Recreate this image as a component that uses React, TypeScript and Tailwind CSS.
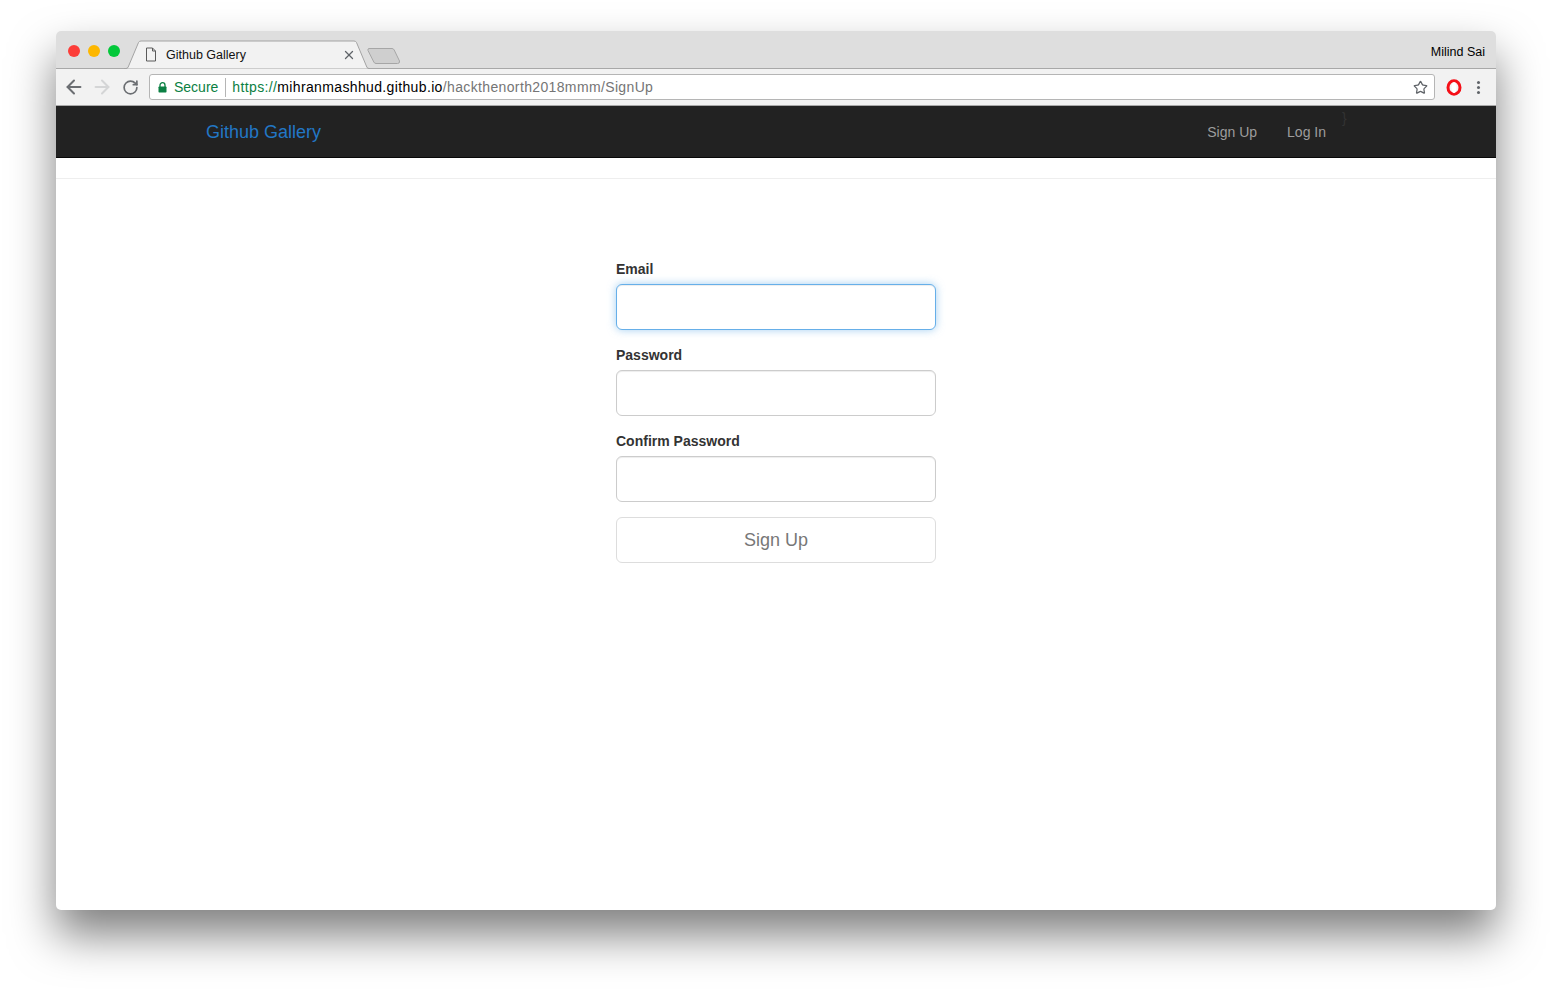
import { ArrowLeft, ArrowRight, RotateCw, Star, X } from 'lucide-react';

const FIELDS = [
  { label: 'Email', focused: true },
  { label: 'Password', focused: false },
  { label: 'Confirm Password', focused: false },
];

function TabShape() {
  return (
    <svg width="246" height="29" viewBox="0 0 246 29" className="absolute left-0 top-0">
      <path d="M0 28.5 H2 Q3.5 28.5 4.2 27 L14.5 2.5 Q15.2 1 17 1 H230 Q231.8 1 232.5 2.5 L242.8 27 Q243.5 28.5 245 28.5 H246" fill="#f2f2f2" stroke="#a3a3a3" strokeWidth="1" />
    </svg>
  );
}

function NewTabShape() {
  return (
    <svg width="34" height="18" viewBox="0 0 34 18">
      <path d="M2 1.5 H25 Q26.5 1.5 27.2 3 L32.5 14 Q33 16.5 30.5 16.5 H9 Q7.5 16.5 6.8 15 L1 3.5 Q0.5 1.5 2 1.5 Z" fill="#cfcfcf" stroke="#a6a6a6" strokeWidth="1" />
    </svg>
  );
}

function FileIcon() {
  return (
    <svg width="12" height="15" viewBox="0 0 12 15" fill="none" stroke="#5a5a5a" strokeWidth="1">
      <path d="M1.5 1 H7.5 L10.5 4 V14 H1.5 Z M7.5 1 V4 H10.5" />
    </svg>
  );
}

function LockIcon() {
  return (
    <svg width="9" height="11" viewBox="0 0 9 11">
      <path d="M2 5 V3.2 A2.5 2.5 0 0 1 7 3.2 V5" fill="none" stroke="#0b8043" strokeWidth="1.3" />
      <rect x="0.5" y="4.5" width="8" height="6" rx="0.7" fill="#0b8043" />
    </svg>
  );
}

function OperaIcon() {
  return (
    <svg width="16" height="17" viewBox="0 0 16 17">
      <ellipse cx="8" cy="8.5" rx="6" ry="6.7" fill="none" stroke="#f50f17" strokeWidth="3" />
      <ellipse cx="8" cy="8.5" rx="2.5" ry="5.6" fill="#fff" />
    </svg>
  );
}

function Field({ label, focused }: { label: string; focused: boolean }) {
  return (
    <div className="mb-[15px]">
      <label className="mb-[5px] block h-5 text-[14px] font-bold leading-5 text-[#333333]">{label}</label>
      <input
        type={label === 'Email' ? 'email' : 'password'}
        className={
          focused
            ? 'block h-[46px] w-full rounded-md border border-[#66afe9] bg-white shadow-[inset_0_1px_1px_rgba(0,0,0,0.075),0_0_8px_rgba(102,175,233,0.6)] outline-none'
            : 'block h-[46px] w-full rounded-md border border-[#cccccc] bg-white shadow-[inset_0_1px_1px_rgba(0,0,0,0.075)] outline-none'
        }
      />
    </div>
  );
}

export default function App() {
  return (
    <div className="h-[990px] w-[1552px] overflow-hidden bg-white pl-14 pt-[31px] font-['Liberation_Sans',Arial,sans-serif]">
      <div className="flex h-[879px] w-[1440px] flex-col overflow-hidden rounded-[5px] bg-white shadow-[0_25px_45px_rgba(0,0,0,0.5)]">
        {/* title bar */}
        <div className="flex h-[38px] shrink-0 items-start border-b border-[#a8a8a8] bg-[#dedede]">
          <div className="flex gap-2 pl-3 pt-[14px]">
            <span className="h-3 w-3 rounded-full bg-[#fc3d39]" />
            <span className="h-3 w-3 rounded-full bg-[#fdb700]" />
            <span className="h-3 w-3 rounded-full bg-[#03c83a]" />
          </div>
          <div className="relative ml-[4px] mt-[9px] h-[29px] w-[243px]">
            <TabShape />
            <div className="relative flex h-full items-center pl-[21px]">
              <FileIcon />
              <span className="ml-[9px] pt-[2px] text-[12.5px] leading-none text-[#111111]">Github Gallery</span>
              <X size={14} strokeWidth={2.2} color="#5f6368" className="absolute left-[218px] top-[8px]" />
            </div>
          </div>
          <div className="mt-[16px]">
            <NewTabShape />
          </div>
          <span className="ml-auto pr-[11px] pt-[14px] text-[12.5px] leading-[14px] text-black">Milind Sai</span>
        </div>

        {/* toolbar */}
        <div className="flex h-[37px] shrink-0 items-center border-b border-[#a9a9a9] bg-[#f2f2f2]">
          <div className="flex w-[93px] items-center pl-1">
            <div className="flex w-7 justify-center">
              <ArrowLeft size={22} strokeWidth={2.2} color="#6b6e72" />
            </div>
            <div className="flex w-7 justify-center">
              <ArrowRight size={22} strokeWidth={2.2} color="#d4d5d6" />
            </div>
            <div className="flex w-7 justify-center">
              <RotateCw size={17} strokeWidth={2.4} color="#6b6e72" />
            </div>
          </div>
          <div className="flex h-[26px] w-[1286px] items-center rounded-[3px] border border-[#b5b5b5] bg-white pl-2 pr-[6px] text-[14px] leading-none">
            <LockIcon />
            <span className="ml-[7px] text-[#0b8043]">Secure</span>
            <span className="ml-[7px] mr-[6px] h-[19px] w-px bg-[#b5b5b5]" />
            <span className="tracking-[0.36px] text-[#0b8043]">https://</span>
            <span className="tracking-[0.36px] text-black">mihranmashhud.github.io</span>
            <span className="tracking-[0.36px] text-[#757575]">/hackthenorth2018mmm/SignUp</span>
            <Star size={15} strokeWidth={2} color="#5f6368" className="ml-auto" />
          </div>
          <div className="ml-[11px]">
            <OperaIcon />
          </div>
          <div className="ml-[15px] flex flex-col gap-[2px]">
            <span className="h-[3px] w-[3px] rounded-full bg-[#5f6368]" />
            <span className="h-[3px] w-[3px] rounded-full bg-[#5f6368]" />
            <span className="h-[3px] w-[3px] rounded-full bg-[#5f6368]" />
          </div>
        </div>

        {/* navbar */}
        <nav className="relative flex h-[52px] shrink-0 items-center border-b border-[#080808] bg-[#222222] pl-[150px] pr-[170px]">
          <a className="text-[18px] leading-5 text-[#2277c5]">Github Gallery</a>
          <div className="ml-auto flex gap-[30px] text-[14px] leading-5 text-[#9d9d9d]">
            <a>Sign Up</a>
            <a>Log In</a>
          </div>
          <span className="absolute left-[1286px] top-[2px] text-[14px] leading-5 text-[#333333]">{'}'}</span>
        </nav>

        {/* page */}
        <div className="mt-5 border-t border-[#eeeeee]" />
        <main className="mx-auto w-[320px] pt-20">
          {FIELDS.map((f) => (
            <Field key={f.label} label={f.label} focused={f.focused} />
          ))}
          <button className="block h-[46px] w-full rounded-md border border-[#dddddd] bg-white text-[18px] text-[#777777]">
            Sign Up
          </button>
        </main>
      </div>
    </div>
  );
}
